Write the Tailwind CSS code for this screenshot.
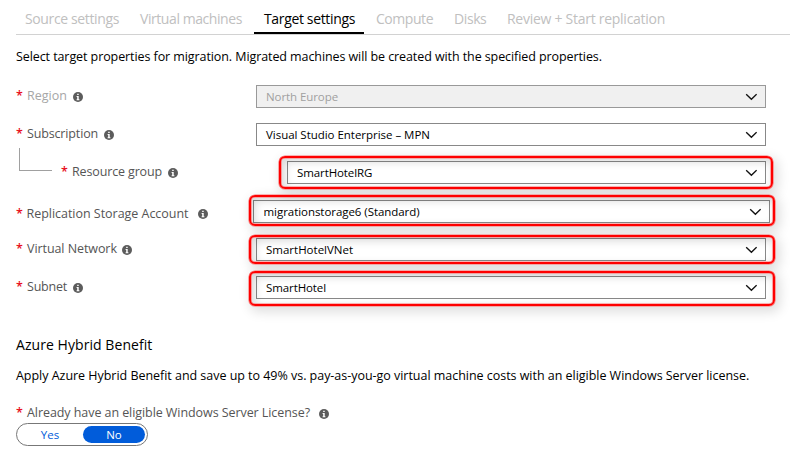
<!DOCTYPE html>
<html lang="en">
<head>
<meta charset="utf-8">
<title>Replicate</title>
<script src="https://cdn.jsdelivr.net/npm/@tailwindcss/browser@4"></script>
</head>
<body class="w-[790px] h-[461px] overflow-hidden bg-white font-['Open_Sans','Noto_Sans',sans-serif] text-[12.5px] text-black whitespace-nowrap">
<svg class="hidden">
  <symbol id="info" viewBox="0 0 10 10"><circle cx="5" cy="5" r="5" fill="#5c5c5c"/><path d="M4.2 1.7h1.5v1.4H4.2zM3.6 4h2.1v3.3h.7v.9H3.6v-.9h.6V4.9h-.6z" fill="#fff"/></symbol>
  <symbol id="chevron" viewBox="0 0 12 8"><path d="M1.2 1.2 6.4 6.2 11.6 1.2" fill="none" stroke="#111" stroke-width="1.35"/></symbol>
</svg>

<nav class="ml-4 flex h-[35px] border-b border-[#d2d2d2] pt-[6px] text-[14px] leading-[26px] text-[#c0c0c0]">
  <span class="ml-[9px] w-[115px] tracking-[-0.37px]">Source settings</span>
  <span class="w-[114px] tracking-[-0.43px]">Virtual machines</span>
  <span class="h-[28px] w-[110px] border-b-2 border-black pl-[10px] text-black tracking-[-0.35px]">Target settings</span>
  <span class="ml-[12px] w-[78px] tracking-[-0.45px]">Compute</span>
  <span class="w-[53px] tracking-[-0.4px]">Disks</span>
  <span class="tracking-[-0.27px]">Review + Start replication</span>
</nav>

<main class="pl-4">
  <p class="h-[50px] pt-[11px] leading-[21px] tracking-[-0.085px]">Select target properties for migration. Migrated machines will be created with the specified properties.</p>

  <div class="flex h-[38px] items-start text-[#555]">
    <div class="flex w-[240px] leading-[22px]"><span class="w-[11px] font-semibold text-[#e81123]">*</span><span class="w-[45.5px] text-[#a6a6a6]">Region</span><svg class="mt-[7px] size-[10px]"><use href="#info"/></svg></div>
    <div class="flex h-[23px] w-[510px] items-center justify-between border border-[#999] bg-[#f0f0f0] pl-[9px] pr-[8px] text-[11.5px] text-[#a0a0a0] tracking-[-0.08px]"><span class="pt-px">North Europe</span><svg class="h-[8px] w-[12px]"><use href="#chevron"/></svg></div>
  </div>

  <div class="flex h-[38px] items-start text-[#555]">
    <div class="relative flex w-[240px] leading-[22px] tracking-[-0.15px]"><span class="w-[11px] font-semibold text-[#e81123]">*</span><span class="w-[76.5px]">Subscription</span><svg class="mt-[7px] size-[10px]"><use href="#info"/></svg>
      <i class="absolute left-[3px] top-[25px] h-[23px] w-[33px] border-b border-l border-[#a0a0a0]"></i></div>
    <div class="flex h-[23px] w-[510px] items-center justify-between border border-[#888] bg-white pl-[9px] pr-[8px] text-[11.5px] text-black tracking-[-0.03px]"><span class="pt-px">Visual Studio Enterprise – MPN</span><svg class="h-[8px] w-[12px]"><use href="#chevron"/></svg></div>
  </div>

  <div class="flex h-[39px] items-start text-[#555]">
    <div class="flex w-[271px] pl-[45px] leading-[22px] tracking-[-0.14px]"><span class="w-[11px] font-semibold text-[#e81123]">*</span><span class="w-[96px]">Resource group</span><svg class="mt-[7px] size-[10px]"><use href="#info"/></svg></div>
    <div class="relative flex h-[23px] w-[479px] items-center justify-between border border-[#888] bg-white pl-[9px] pr-[8px] text-[11.5px] text-black tracking-[-0.1px]"><span class="pt-px">SmartHotelRG</span><svg class="h-[8px] w-[12px]"><use href="#chevron"/></svg>
      <i class="absolute -left-[9px] -right-[8px] -top-[6px] -bottom-[6px] rounded-[6px] border-2 border-[#fe0000] shadow-[0_0_0_0.6px_#ff7070,3px_4px_12px_2px_rgba(0,0,0,0.13),inset_0_0_0_0.6px_#ff7070,inset_3px_3px_8px_1px_rgba(0,0,0,0.15)]"></i></div>
  </div>

  <div class="flex h-[38px] items-start text-[#555]">
    <div class="flex w-[237px] pt-[2px] leading-[23px] tracking-[-0.03px]"><span class="w-[10.5px] font-semibold text-[#e81123]">*</span><span class="w-[171px]">Replication Storage Account</span><svg class="mt-[7px] size-[10px]"><use href="#info"/></svg></div>
    <div class="relative flex h-[23px] w-[517px] items-center justify-between border border-[#888] bg-white pl-[9.5px] pr-[8px] text-[11.5px] text-black tracking-[-0.05px]"><span class="pt-px">migrationstorage6 (Standard)</span><svg class="h-[8px] w-[12px]"><use href="#chevron"/></svg>
      <i class="absolute -left-[5px] -right-[6px] -top-[6px] -bottom-[4px] rounded-[6px] border-2 border-[#fe0000] shadow-[0_0_0_0.6px_#ff7070,3px_4px_12px_2px_rgba(0,0,0,0.13),inset_0_0_0_0.6px_#ff7070,inset_3px_3px_8px_1px_rgba(0,0,0,0.15)]"></i></div>
  </div>

  <div class="flex h-[38px] items-start text-[#555]">
    <div class="flex w-[240px] leading-[22px] tracking-[-0.07px]"><span class="w-[11px] font-semibold text-[#e81123]">*</span><span class="w-[95px]">Virtual Network</span><svg class="mt-[7px] size-[10px]"><use href="#info"/></svg></div>
    <div class="relative flex h-[23px] w-[510px] items-center justify-between border border-[#888] bg-white pl-[9px] pr-[8px] text-[11.5px] text-black"><span class="pt-px">SmartHotelVNet</span><svg class="h-[8px] w-[12px]"><use href="#chevron"/></svg>
      <i class="absolute -left-[8px] -right-[10px] -top-[4px] -bottom-[4px] rounded-[6px] border-2 border-[#fe0000] shadow-[0_0_0_0.6px_#ff7070,3px_4px_12px_2px_rgba(0,0,0,0.13),inset_0_0_0_0.6px_#ff7070,inset_3px_3px_8px_1px_rgba(0,0,0,0.15)]"></i></div>
  </div>

  <div class="flex h-[57px] items-start text-[#555]">
    <div class="flex w-[240px] leading-[22px] tracking-[-0.2px]"><span class="w-[11px] font-semibold text-[#e81123]">*</span><span class="w-[45.5px]">Subnet</span><svg class="mt-[7px] size-[10px]"><use href="#info"/></svg></div>
    <div class="relative flex h-[23px] w-[510px] items-center justify-between border border-[#888] bg-white pl-[9px] pr-[8px] text-[11.5px] text-black tracking-[-0.1px]"><span class="pt-px">SmartHotel</span><svg class="h-[8px] w-[12px]"><use href="#chevron"/></svg>
      <i class="absolute -left-[8px] -right-[10px] -top-[6px] -bottom-[8px] rounded-[6px] border-2 border-[#fe0000] shadow-[0_0_0_0.6px_#ff7070,3px_4px_12px_2px_rgba(0,0,0,0.13),inset_0_0_0_0.6px_#ff7070,inset_3px_3px_8px_1px_rgba(0,0,0,0.15)]"></i></div>
  </div>

  <h2 class="h-[31px] text-[14px] leading-[24px] tracking-[0.06px]">Azure Hybrid Benefit</h2>
  <p class="h-[37px] leading-[23px] tracking-[-0.03px]">Apply Azure Hybrid Benefit and save up to 49% vs. pay-as-you-go virtual machine costs with an eligible Windows Server license.</p>

  <div class="flex h-[22px] leading-[23px] tracking-[-0.07px] text-[#555]"><span class="w-[11px] font-semibold text-[#e81123]">*</span><span class="w-[292px]">Already have an eligible Windows Server License?</span><svg class="mt-[8px] size-[10px]"><use href="#info"/></svg></div>
  <div class="flex h-[23px] w-[132px] items-center rounded-full border border-[#777] pr-[2px] text-center text-[11.5px] leading-[17px]">
    <span class="w-[66px] text-[#015cda]">Yes</span>
    <span class="h-[17px] w-[62px] rounded-full bg-[#015cda] text-white">No</span>
  </div>
</main>
</body>
</html>
